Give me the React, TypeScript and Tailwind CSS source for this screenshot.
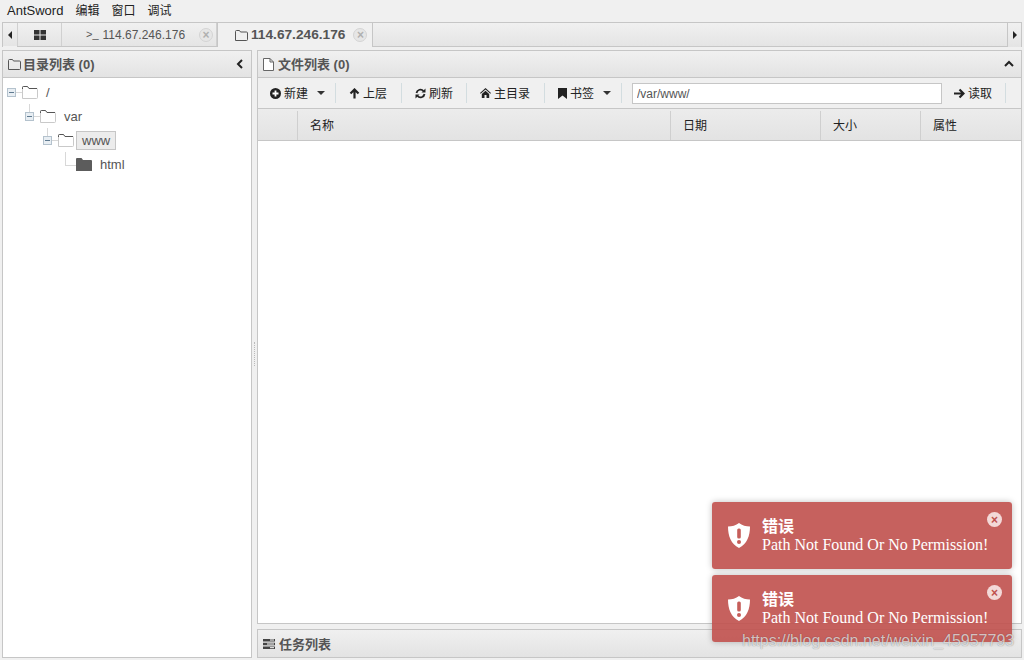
import React from "react";

const FolderOpen = ({ className = "" }: { className?: string }) => (
  <svg width="16" height="13" viewBox="0 0 16 13" className={className}>
    <path d="M0.5 12.5V1.5Q0.5 0.5 1.5 0.5H5.5L7 2.5H14.5Q15.5 2.5 15.5 3.5V11.5Q15.5 12.5 14.5 12.5Z" fill="#fff" stroke="#c9c9c9" />
    <path d="M0.5 3V1.5Q0.5 0.5 1.5 0.5H5.5L7 2.5H15" fill="none" stroke="#555" />
  </svg>
);
const FolderSolid = () => (
  <svg width="16" height="13" viewBox="0 0 16 13">
    <path d="M0 13V1Q0 0 1 0H5.5L7 2H15Q16 2 16 3V13Z" fill="#5c5c5c" />
  </svg>
);
const Minus = () => (
  <span className="flex h-[9px] w-[9px] shrink-0 items-center justify-center border border-[#b4c2cd] bg-[#e8eef3]">
    <span className="h-px w-[5px] bg-[#5f7a90]" />
  </span>
);
const SmallFolder = () => (
  <svg width="13" height="11" viewBox="0 0 13 11">
    <path d="M0.5 10.5V1.5Q0.5 0.5 1.5 0.5H4.5L5.5 2H11.5Q12.5 2 12.5 3V9.5Q12.5 10.5 11.5 10.5Z" fill="none" stroke="#555" />
  </svg>
);
const SmallFile = () => (
  <svg width="11" height="13" viewBox="0 0 11 13">
    <path d="M0.5 0.5H7L10.5 4V12.5H0.5ZM7 0.5V4H10.5" fill="#fff" stroke="#666" />
  </svg>
);
const Sep = () => <span className="h-[20px] w-px shrink-0 bg-[#d3dde0]" />;
const Caret = () => <span className="h-0 w-0 border-x-[4px] border-t-[4px] border-x-transparent border-t-[#333]" />;
const CloseDot = () => (
  <span className="flex h-[14px] w-[14px] items-center justify-center rounded-full border border-[#d4d4d4] bg-[#e6e6e6] text-[12px] font-bold leading-none text-[#b0b0b0]">×</span>
);
const Tri = ({ dir }: { dir: "l" | "r" }) => (
  <span className={dir === "l" ? "h-0 w-0 border-y-[4px] border-r-[4px] border-y-transparent border-r-[#222]" : "h-0 w-0 border-y-[4px] border-l-[4px] border-y-transparent border-l-[#222]"} />
);
const PanelHead = ({ icon, title, right }: { icon: React.ReactNode; title: string; right?: React.ReactNode }) => (
  <div className="flex h-[27px] shrink-0 items-center border-b border-[#c6c6c6] bg-gradient-to-b from-[#f0f0f0] to-[#e3e3e3] pl-[5px] pr-[7px]">
    <span className="flex w-[15px] shrink-0 items-center">{icon}</span>
    <span className="pt-[2px] text-[13px] font-bold text-[#555]">{title}</span>
    <span className="ml-auto">{right}</span>
  </div>
);
const Tool = ({ icon, label, caret, w, tight }: { icon: React.ReactNode; label: string; caret?: boolean; w: string; tight?: boolean }) => (
  <div className={`flex shrink-0 items-center ${w}`}>
    <span className={`flex w-[11px] justify-center ${tight ? "mr-[2px]" : "mr-[3px]"}`}>{icon}</span>
    <span className="pt-[2px] text-[12px] text-[#222]">{label}</span>
    {caret && <span className={`flex ${tight ? "ml-[9px]" : "ml-[9px]"}`}><Caret /></span>}
  </div>
);
const Toast = () => (
  <div className="relative flex h-[67px] w-[300px] items-center rounded-[3px] bg-[#c0504d]/90 pl-[16px] text-white shadow-[0_0_6px_rgba(0,0,0,0.25)]">
    <svg width="22" height="25" viewBox="0 0 22 25" className="shrink-0">
      <path d="M11 0C14 2.5 18 3.5 22 3.5C22 13 19 21 11 25C3 21 0 13 0 3.5C4 3.5 8 2.5 11 0Z" fill="#fff" />
      <rect x="9.2" y="5.5" width="3.6" height="10" rx="1.5" fill="#c65e5a" />
      <circle cx="11" cy="19" r="2" fill="#c65e5a" />
    </svg>
    <div className="ml-[12px] font-['Liberation_Serif','Noto_Sans_CJK_SC',serif] text-[16px] leading-[18px]">
      <div className="font-bold">错误</div>
      <div>Path Not Found Or No Permission!</div>
    </div>
    <span className="absolute right-[10px] top-[10px] flex h-[15px] w-[15px] items-center justify-center rounded-full bg-[#f3d9d8] text-[12px] font-bold leading-none text-[#c0504d]">×</span>
  </div>
);

export default function App() {
  return (
    <div className="relative flex h-[660px] w-[1024px] flex-col overflow-hidden bg-[#f0f0f0] font-['Liberation_Sans','Noto_Sans_CJK_SC',sans-serif] text-[#333]">
      <div className="flex h-[22px] shrink-0 items-center gap-[12px] pl-[7px] text-[12px] text-[#222]">
        <span className="text-[13px]">AntSword</span><span>编辑</span><span>窗口</span><span>调试</span>
      </div>

      <div className="mx-[2px] flex h-[25px] shrink-0 border-x border-t border-[#c6c6c6] bg-gradient-to-b from-[#f0f0f0] to-[#e4e4e4]">
        <div className="flex w-[14px] shrink-0 items-center justify-center border-b border-[#f0f0f0]"><Tri dir="l" /></div>
        <div className="flex grow border-b border-[#c6c6c6]">
          <div className="flex w-[45px] items-center justify-center border-x border-[#d0d0d0]">
            <svg width="12" height="10" viewBox="0 0 12 10"><path d="M0 0h5.5v4.5H0zM6.5 0H12v4.5H6.5zM0 5.5h5.5V10H0zM6.5 5.5H12V10H6.5z" fill="#333" /></svg>
          </div>
          <div className="flex w-[155px] items-center border-r border-[#d0d0d0] pl-[24px] text-[12px] text-[#555]">
            <span className="mr-[4px] text-[11px]">&gt;_</span><span>114.67.246.176</span>
            <span className="ml-[14px]"><CloseDot /></span>
          </div>
          <div className="-mb-px flex w-[156px] items-center border-r border-l border-[#c6c6c6] bg-[#f0f0f0] pl-[17px] text-[13.7px] font-bold text-[#555]">
            <span className="mr-[3px] flex"><SmallFolder /></span><span>114.67.246.176</span>
            <span className="ml-[8px]"><CloseDot /></span>
          </div>
        </div>
        <div className="flex w-[14px] shrink-0 items-center justify-center border-l border-[#c6c6c6]"><Tri dir="r" /></div>
      </div>

      <div className="mt-[3px] flex min-h-0 grow pb-[2px] pl-[2px] pr-[2px]">
        <div className="flex w-[250px] shrink-0 flex-col border border-[#c6c6c6] bg-white">
          <PanelHead
            icon={<SmallFolder />}
            title="目录列表 (0)"
            right={<svg width="8" height="10" viewBox="0 0 8 10" className="block"><path d="M6 1L2 5l4 4" fill="none" stroke="#222" strokeWidth="2" /></svg>}
          />
          <div className="relative grow text-[13px] text-[#555]">
            <div className="absolute left-[26px] top-[26px] h-[8px] w-px bg-[#d8d8d8]" />
            <div className="absolute left-[44px] top-[50px] h-[8px] w-px bg-[#d8d8d8]" />
            <div className="absolute left-[62px] top-[74px] h-[14px] w-[11px] border-b border-l border-[#d8d8d8]" />
            <div className="flex flex-col pl-[4px] pt-[2px]">
              <div className="flex h-[24px] items-center">
                <Minus /><span className="h-px w-[6px] bg-[#d8d8d8]" /><FolderOpen /><span className="ml-[8px] pt-[2px]">/</span>
              </div>
              <div className="flex h-[24px] items-center pl-[18px]">
                <Minus /><span className="h-px w-[6px] bg-[#d8d8d8]" /><FolderOpen /><span className="ml-[8px] pt-[2px]">var</span>
              </div>
              <div className="flex h-[24px] items-center pl-[36px]">
                <Minus /><span className="h-px w-[6px] bg-[#d8d8d8]" /><FolderOpen />
                <span className="ml-[2px] flex h-[19px] items-center border border-[#c6c6c6] bg-[#ececec] px-[5px] pt-[2px]">www</span>
              </div>
              <div className="flex h-[24px] items-center pl-[69px]">
                <FolderSolid /><span className="ml-[8px] pt-[2px]">html</span>
              </div>
            </div>
          </div>
        </div>

        <div className="flex w-[5px] shrink-0 items-center justify-center">
          <span className="h-[24px] w-px border-l border-dotted border-[#bbb]" />
        </div>

        <div className="flex min-w-0 grow flex-col">
          <div className="flex min-h-0 grow flex-col border border-[#c6c6c6] bg-white">
            <PanelHead
              icon={<SmallFile />}
              title="文件列表 (0)"
              right={<svg width="10" height="8" viewBox="0 0 10 8" className="block"><path d="M1 6l4-4 4 4" fill="none" stroke="#222" strokeWidth="2" /></svg>}
            />
            <div className="flex h-[31px] shrink-0 items-center border-b border-[#c6c6c6] bg-[#f0f0f0]">
              <Tool w="w-[77px] pl-[12px]" caret label="新建" icon={
                <svg width="11" height="11" viewBox="0 0 11 11"><circle cx="5.5" cy="5.5" r="5.5" fill="#222" /><path d="M5.5 2.5v6M2.5 5.5h6" stroke="#fff" strokeWidth="1.8" /></svg>
              } />
              <Sep />
              <Tool w="w-[65px] pl-[13px]" label="上层" icon={
                <svg width="11" height="11" viewBox="0 0 11 11"><path d="M5.5 10.5V2M1.5 5.5l4-4 4 4" fill="none" stroke="#222" strokeWidth="2.2" /></svg>
              } />
              <Sep />
              <Tool w="w-[64px] pl-[13px]" label="刷新" icon={
                <svg width="11" height="11" viewBox="0 0 11 11"><path d="M1.5 5a4 4 0 0 1 7-2M9.5 6a4 4 0 0 1-7 2" fill="none" stroke="#222" strokeWidth="1.8" /><path d="M10.5 0.5v4h-4zM0.5 10.5v-4h4z" fill="#222" /></svg>
              } />
              <Sep />
              <Tool w="w-[77px] pl-[13px]" label="主目录" icon={
                <svg width="11" height="10" viewBox="0 0 11 10"><path d="M5.5 0L0 5l.7.7L5.5 1.5l4.8 4.2L11 5zM1.8 6L5.5 2.8 9.2 6v4H6.5V7h-2v3H1.8z" fill="#222" /></svg>
              } />
              <Sep />
              <Tool w="w-[76px] pl-[12px]" tight caret label="书签" icon={
                <svg width="9" height="11" viewBox="0 0 9 11"><path d="M0 0h9v11L4.5 7.5 0 11z" fill="#222" /></svg>
              } />
              <Sep />
              <input readOnly value="/var/www/" className="ml-[10px] h-[21px] w-[310px] shrink-0 border border-[#c6c6c6] bg-white px-[4px] pt-[1px] text-[12px] text-[#555] outline-none" />
              <div className="flex shrink-0 items-center pl-[12px]">
                <svg width="11" height="11" viewBox="0 0 11 11" className="mr-[3px]"><path d="M0 5.5h9M5.5 1.5l4 4-4 4" fill="none" stroke="#222" strokeWidth="2.2" /></svg>
                <span className="pt-[2px] text-[12px] text-[#222]">读取</span>
              </div>
              <span className="ml-[13px] flex"><Sep /></span>
            </div>
            <div className="flex h-[32px] shrink-0 border-b border-[#c6c6c6] bg-gradient-to-b from-[#ececec] to-[#e3e3e3] pt-[2px] text-[12px] text-[#222]">
              <div className="w-[40px] shrink-0 border-r border-[#cfcfcf]" />
              <div className="flex w-[373px] shrink-0 items-center border-r border-[#cfcfcf] pl-[12px]">名称</div>
              <div className="flex w-[150px] shrink-0 items-center border-r border-[#cfcfcf] pl-[12px]">日期</div>
              <div className="flex w-[100px] shrink-0 items-center border-r border-[#cfcfcf] pl-[12px]">大小</div>
              <div className="flex grow items-center pl-[12px]">属性</div>
            </div>
            <div className="grow bg-white" />
          </div>
          <div className="mt-[5px] flex h-[29px] shrink-0 items-center border border-[#c6c6c6] bg-gradient-to-b from-[#f0f0f0] to-[#e3e3e3] pl-[5px]">
            <svg width="12" height="10" viewBox="0 0 12 10" className="mr-[4px]"><path d="M0 0h12v2.6H0zM0 3.7h12v2.6H0zM0 7.4h12V10H0z" fill="#444" /><path d="M7 1h4M4 5h7M7 8.7h4" stroke="#fff" strokeWidth="1" /></svg>
            <span className="pt-[2px] text-[13px] font-bold text-[#555]">任务列表</span>
          </div>
        </div>
      </div>

      <div className="absolute left-[712px] top-[502px] flex flex-col gap-[6px]">
        <Toast />
        <Toast />
      </div>
      <span className="absolute left-[742px] top-[632px] text-[16px] leading-[18px] text-white/70 [text-shadow:0_0_1px_rgba(0,0,0,0.45)]">https://blog.csdn.net/weixin_45957793</span>
    </div>
  );
}
